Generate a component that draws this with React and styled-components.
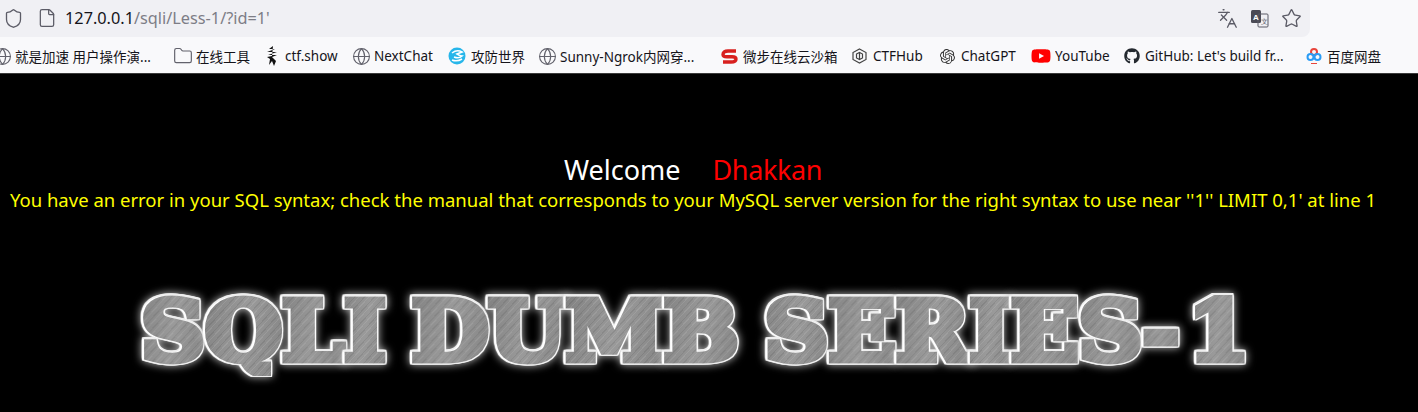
import React from 'react';
import styled, { createGlobalStyle } from 'styled-components';
import { Shield, File, Folder, Globe, Star, Languages } from 'lucide-react';
import { FaGithub, FaYoutube } from 'react-icons/fa';
import { SiOpenai } from 'react-icons/si';

const GlobalStyle = createGlobalStyle`
    html, body {
        margin: 0;
        padding: 0;
        background: #000;
        overflow: hidden;
    }
    body {
        font-family: "Noto Sans", "Noto Sans CJK SC", sans-serif;
    }
`

const TITLE_WORDS = ['SQLI', 'DUMB', 'SERIES-1'];

function CtfIcon() {
    return (
        <svg width="16" height="20" viewBox="0 0 16 20">
            <path d="M9 0 L5 3 L11 3 L3 6 L13 6 L4 9 L13 9 L8 11 L12 15 L10 20 L8 15 L5 19 L6 13 L3 11 L8 10 Z" fill="#111" />
        </svg>
    );
}

function AdworldIcon() {
    return (
        <svg width="18" height="18" viewBox="0 0 18 18">
            <circle cx="9" cy="9" r="8.5" fill="#27b6ea" />
            <path d="M4 6 Q9 2 14 5 L9 7 Q12 9 14 9 Q11 12 6 10 M4 13 Q9 15 14 12" fill="none" stroke="#fff" strokeWidth="1.6" />
        </svg>
    );
}

function ThreatbookIcon() {
    return (
        <svg width="17" height="17" viewBox="0 0 17 17" fill="none" stroke="#d8201f" strokeWidth="3.4">
            <path d="M15 3 H7 Q2 3 2 6.5 Q2 8.7 6 8.7 H11 Q15 8.7 15 11 Q15 14 10 14 H2" />
        </svg>
    );
}

function CubeIcon() {
    return (
        <svg width="15" height="16" viewBox="0 0 15 16" fill="none" stroke="#444" strokeWidth="1.2">
            <path d="M7.5 1 L14 4.5 V11.5 L7.5 15 L1 11.5 V4.5 Z" />
            <path d="M4.5 6 L7.5 4.5 L10.5 6 V10 L7.5 11.5 L4.5 10 Z M7.5 4.5 V11.5" />
        </svg>
    );
}

function BaiduIcon() {
    return (
        <svg width="16" height="18" viewBox="0 0 16 18" fill="none" strokeWidth="2">
            <circle cx="8" cy="5" r="3" stroke="#e8453c" />
            <circle cx="4.5" cy="10" r="3" stroke="#2a9cf5" />
            <circle cx="11.5" cy="10" r="3" stroke="#2a9cf5" />
            <path d="M5 16.5 H11" stroke="#e8453c" strokeWidth="1" />
        </svg>
    );
}

const globe = <Globe size={19} color="#62626c" strokeWidth={1.4} />;

const BOOKMARKS = [
    { id: 'speed', icon: globe, w: 16, label: '就是加速 用户操作演...', width: 145 },
    { id: 'tools', icon: <Folder size={20} color="#62626c" strokeWidth={1.4} />, w: 17, label: '在线工具', width: 54 },
    { id: 'ctf', icon: <CtfIcon />, w: 16, label: 'ctf.show', width: 54 },
    { id: 'next', icon: globe, w: 16, label: 'NextChat', width: 60 },
    { id: 'adworld', icon: <AdworldIcon />, w: 18, label: '攻防世界', width: 54 },
    { id: 'sunny', icon: globe, w: 16, label: 'Sunny-Ngrok内网穿...', width: 147 },
    { id: 'threat', icon: <ThreatbookIcon />, w: 17, label: '微步在线云沙箱', width: 94 },
    { id: 'ctfhub', icon: <CubeIcon />, w: 17, label: 'CTFHub', width: 52 },
    { id: 'gpt', icon: <SiOpenai size={15} color="#333" />, w: 17, label: 'ChatGPT', width: 57 },
    { id: 'yt', icon: <FaYoutube size={20} color="#f00" />, w: 18, label: 'YouTube', width: 55 },
    { id: 'gh', icon: <FaGithub size={16} color="#24292f" />, w: 16, label: "GitHub: Let's build fr...", width: 146 },
    { id: 'baidu', icon: <BaiduIcon />, w: 17, label: '百度网盘', width: 54 },
];

function TranslateBoxIcon() {
    return (
        <svg width="19" height="19" viewBox="0 0 19 19">
            <rect x="1" y="1" width="10" height="13" rx="1.5" fill="#4a4a55" />
            <rect x="8" y="5" width="10" height="13" rx="1" fill="none" stroke="#5b5b66" />
            <text x="3" y="11" fontSize="8" fontWeight="700" fill="#fff" fontFamily="Liberation Sans, sans-serif">A</text>
            <text x="11" y="15" fontSize="7" fill="#5b5b66" fontFamily="Liberation Sans, sans-serif">文</text>
        </svg>
    );
}

function App() {
    return (
        <>
            <GlobalStyle />
            <StyledChrome>
                <StyledUrlRow>
                    <StyledUrlBar>
                        <StyledSiteIcons>
                            <Shield size={21} color="#5b5b66" strokeWidth={1.5} />
                            <File size={20} color="#5b5b66" strokeWidth={1.5} />
                        </StyledSiteIcons>
                        <StyledUrl>
                            <b>127.0.0.1</b>/sqli/Less-1/?id=1'
                        </StyledUrl>
                        <StyledPageActions>
                            <Languages size={21} color="#5b5b66" strokeWidth={1.5} />
                            <TranslateBoxIcon />
                            <Star size={21} color="#5b5b66" strokeWidth={1.5} />
                        </StyledPageActions>
                    </StyledUrlBar>
                </StyledUrlRow>
                <StyledBookmarks>
                    {BOOKMARKS.map((b) => (
                        <StyledBookmark key={b.id}>
                            <StyledBookmarkIcon $width={b.w}>{b.icon}</StyledBookmarkIcon>
                            <StyledBookmarkLabel $width={b.width}>{b.label}</StyledBookmarkLabel>
                        </StyledBookmark>
                    ))}
                </StyledBookmarks>
            </StyledChrome>
            <StyledPage>
                <StyledWelcome>
                    <span>Welcome</span>
                    <StyledName>Dhakkan</StyledName>
                </StyledWelcome>
                <StyledError>
                    You have an error in your SQL syntax; check the manual that corresponds to your MySQL server version for the right syntax to use near ''1'' LIMIT 0,1' at line 1
                </StyledError>
                <StyledTitle>
                    {TITLE_WORDS.map((word) => (
                        <StyledWord key={word}>
                            {word.split('').map((ch, i) => (
                                <StyledLetter key={i} $digit={ch === '1'}>{ch}</StyledLetter>
                            ))}
                        </StyledWord>
                    ))}
                </StyledTitle>
            </StyledPage>
        </>
    );
}

const StyledChrome = styled.div`
    background: #f9f9fb;
    border-bottom: 1px solid #3a3a3a;
    height: 73px;
    overflow: hidden;
`

const StyledUrlRow = styled.div`
    height: 37px;
    width: 1310px;
`

const StyledUrlBar = styled.div`
    height: 37px;
    background: #f0f0f4;
    border-radius: 0 0 8px 0;
    display: flex;
    align-items: center;
    padding: 0 8px 1px 3px;
    box-sizing: border-box;
`

const StyledSiteIcons = styled.div`
    display: flex;
    align-items: center;
    gap: 13px;
    width: 62px;
    flex-shrink: 0;
`

const StyledUrl = styled.div`
    font-family: "Noto Sans", sans-serif;
    font-size: 16.3px;
    color: #7d7d86;
    flex: 1;
    b {
        font-weight: 400;
        color: #15141a;
    }
`

const StyledPageActions = styled.div`
    display: flex;
    align-items: center;
    gap: 12px;
`

const StyledBookmarks = styled.div`
    height: 36px;
    display: flex;
    align-items: center;
    gap: 14px;
    margin-left: -6px;
    padding-top: 2px;
    box-sizing: border-box;
    white-space: nowrap;
`

const StyledBookmark = styled.div`
    display: flex;
    align-items: center;
    gap: 5px;
`

const StyledBookmarkIcon = styled.span`
    display: flex;
    align-items: center;
    justify-content: center;
    width: ${(p) => p.$width}px;
    svg {
        flex-shrink: 0;
    }
`

const StyledBookmarkLabel = styled.span`
    display: block;
    width: ${(p) => p.$width}px;
    font-size: 13.5px;
    color: #15141a;
    overflow: hidden;
`

const StyledPage = styled.div`
    width: 1386px;
    height: 338px;
    background: #000;
    display: flex;
    flex-direction: column;
    align-items: center;
    overflow: hidden;
`

const StyledWelcome = styled.div`
    margin-top: 78px;
    display: flex;
    gap: 32px;
    font-size: 27px;
    line-height: 35px;
    color: #fff;
`

const StyledName = styled.span`
    color: #f00;
    letter-spacing: -0.4px;
`

const StyledError = styled.div`
    font-size: 18.5px;
    line-height: 26px;
    color: #ff0;
    white-space: nowrap;
`

const StyledTitle = styled.div`
    margin-top: 73px;
    display: flex;
    gap: 24px;
    font-family: "DejaVu Serif", serif;
    font-weight: 700;
    font-size: 82px;
    line-height: 90px;
    transform: translateX(2px) scaleX(1.08);
`

const StyledWord = styled.div`
    display: flex;
`

const StyledLetter = styled.span`
    display: block;
    padding: 0 5px;
    margin: 0 -5px 0 ${(p) => (p.$digit ? '3px' : '-5px')};
    color: transparent;
    -webkit-text-stroke: 7px transparent;
    background:
        repeating-linear-gradient(130deg, rgba(255, 255, 255, 0.1) 0 1px, transparent 1px 4px, rgba(0, 0, 0, 0.08) 4px 5px, transparent 5px 7px),
        linear-gradient(100deg, #7e7e7e, #9a9a9a 50%, #828282);
    -webkit-background-clip: text;
    background-clip: text;
    filter: drop-shadow(1.2px 0 0.6px #fff) drop-shadow(-1.2px 0 0.6px #fff) drop-shadow(0 1.2px 0.6px #eee) drop-shadow(0 -1.2px 0.6px #eee) drop-shadow(0 0 4px #bbb);
`

export default App;
